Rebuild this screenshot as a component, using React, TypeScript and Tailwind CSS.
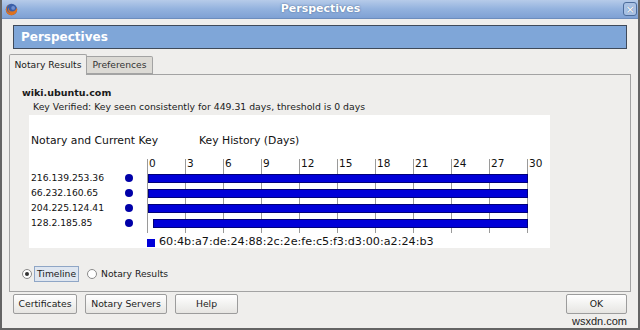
import React from 'react';

const TICKS = [0, 3, 6, 9, 12, 15, 18, 21, 24, 27, 30];
const NOTARIES = [
  { ip: '216.139.253.36', start: 119 },
  { ip: '66.232.160.65', start: 119 },
  { ip: '204.225.124.41', start: 119 },
  { ip: '128.2.185.85', start: 124 },
];
const FINGERPRINT = '60:4b:a7:de:24:88:2c:2e:fe:c5:f3:d3:00:a2:24:b3';

function FirefoxIcon() {
  return (
    <svg width="13" height="13" viewBox="0 0 16 16">
      <circle cx="8" cy="8" r="7" fill="#3b5fa8" />
      <path d="M8 1a7 7 0 1 0 6.6 4.6C14 8 12 10.5 8.5 10.5 5.5 10.5 4 8 4.5 5.5 3 7 3.5 11 7 12.5 3 12 1.5 8 2.5 5 3.5 2.5 5.5 1.2 8 1z" fill="#e0721e" />
      <circle cx="10" cy="6" r="2.3" fill="#6f8fd0" />
    </svg>
  );
}

function Chart() {
  return (
    <svg width="521" height="133" className="block" style={{ fontFamily: '"DejaVu Sans", sans-serif' }}>
      <text x="2" y="29" fontSize="10.8" fill="#111">Notary and Current Key</text>
      <text x="170" y="29" fontSize="10.8" fill="#111">Key History (Days)</text>
      {TICKS.map((t, i) => (
        <g key={t}>
          <line x1={118.5 + 38 * i} x2={118.5 + 38 * i} y1="44" y2="118" stroke="#9a9a9a" />
          <text x={120 + 38 * i} y="52" fontSize="10.5" fill="#111">{t}</text>
        </g>
      ))}
      {NOTARIES.map((n, i) => (
        <g key={n.ip}>
          <text x="2" y={66 + 15 * i} fontSize="9.2" fill="#111">{n.ip}</text>
          <circle cx="100" cy={63 + 15 * i} r="4" fill="#0000a8" />
          <rect x={n.start + 0.5} y={59.5 + 15 * i} width={498 - n.start} height="8" fill="#0000d8" stroke="#00007a" />
        </g>
      ))}
      <rect x="118" y="124" width="8" height="8" fill="#0000d8" />
      <text x="130" y="130" fontSize="11.2" fill="#111">{FINGERPRINT}</text>
    </svg>
  );
}

function Radio({ checked, label, focused }: { checked?: boolean; label: string; focused?: boolean }) {
  return (
    <div className="flex items-center gap-[2px]">
      <span className="w-[10px] h-[10px] rounded-full border border-[#8a8a8a] bg-white flex items-center justify-center">
        {checked && <span className="w-[4px] h-[4px] rounded-full bg-[#333]" />}
      </span>
      <span
        className={
          focused
            ? 'px-[2px] h-[16px] leading-[14px] border border-[#8fa6c6] bg-[#dfe6f0]'
            : 'px-[2px] h-[16px] leading-[16px]'
        }
      >
        {label}
      </span>
    </div>
  );
}

function Button({ children, width }: { children: React.ReactNode; width: string }) {
  return (
    <button
      className={`${width} h-[20px] rounded-[2px] border border-[#9c9c9c] bg-linear-to-b from-white to-[#e6e5e2] text-[9.3px] text-[#222] leading-none`}
    >
      {children}
    </button>
  );
}

export default function App() {
  return (
    <div className="w-[640px] h-[330px] flex flex-col bg-[#efeeec] border-x-2 border-b-2 border-[#646464] font-['DejaVu_Sans',sans-serif] text-[#1a1a1a] overflow-hidden">
      {/* title bar */}
      <div className="relative h-[19px] shrink-0 -mx-[2px] flex items-center bg-linear-to-b from-[#b6cbe9] via-[#93b2de] to-[#7fa1d4] border-b border-[#6d8dbd]">
        <div className="pl-[5px]">
          <FirefoxIcon />
        </div>
        <div className="flex-1 text-center text-[11px] font-bold text-white [text-shadow:0_0_2px_#3d5a86]">
          Perspectives
        </div>
        <div className="mr-[3px] w-[14px] h-[14px] rounded-[3px] border border-[#4d6d9c] bg-[#a9c1e3] flex items-center justify-center text-[11px] leading-none text-white [text-shadow:0_0_1px_#40608f]">
          ×
        </div>
      </div>

      <div className="flex-1 flex flex-col px-[7px] pt-[6px]">
        {/* header */}
        <div className="mx-[4px] h-[24px] border border-[#3f4a5a] bg-[#7fa6d8] pl-[7px] flex items-center text-[12px] font-bold text-white">
          Perspectives
        </div>

        {/* tabs */}
        <div className="mt-[5px] flex items-end h-[21px] relative z-10 -mb-px">
          <div className="w-[78px] h-[21px] border border-b-0 border-[#a3a3a3] rounded-t-[2px] bg-[#efeeec] text-[9.2px] flex items-center justify-center">
            Notary Results
          </div>
          <div className="w-[66px] h-[18px] mb-px border border-l-0 border-[#a3a3a3] rounded-tr-[2px] bg-[#dcdad5] text-[9.2px] flex items-center justify-center text-[#333]">
            Preferences
          </div>
        </div>

        {/* panel */}
        <div className="h-[218px] border border-[#a3a3a3] bg-[#efeeec] flex flex-col pl-[12px]">
          <div className="mt-[12px] h-[12px] leading-[12px] text-[9.5px] font-bold">wiki.ubuntu.com</div>
          <div className="mt-[2px] h-[12px] leading-[12px] text-[9.3px] pl-[11px]">
            Key Verified: Key seen consistently for 449.31 days, threshold is 0 days
          </div>
          <div className="mt-[2px] ml-[7px] w-[521px] h-[133px] bg-white">
            <Chart />
          </div>
          <div className="mt-[16px] h-[20px] flex items-center gap-[8px] text-[9.2px]">
            <Radio checked focused label="Timeline" />
            <Radio label="Notary Results" />
          </div>
        </div>

        {/* buttons */}
        <div className="mt-[2px] flex items-start px-[4px]">
          <div className="flex gap-[8px]">
            <Button width="w-[64px]">Certificates</Button>
            <Button width="w-[82px]">Notary Servers</Button>
            <Button width="w-[63px]">Help</Button>
          </div>
          <div className="ml-auto flex flex-col items-end">
            <Button width="w-[61px]">OK</Button>
            <div className="mt-[1px] text-[11px] leading-[12px] font-['Liberation_Sans',sans-serif] text-[#222]">
              wsxdn.com
            </div>
          </div>
        </div>
      </div>
    </div>
  );
}
